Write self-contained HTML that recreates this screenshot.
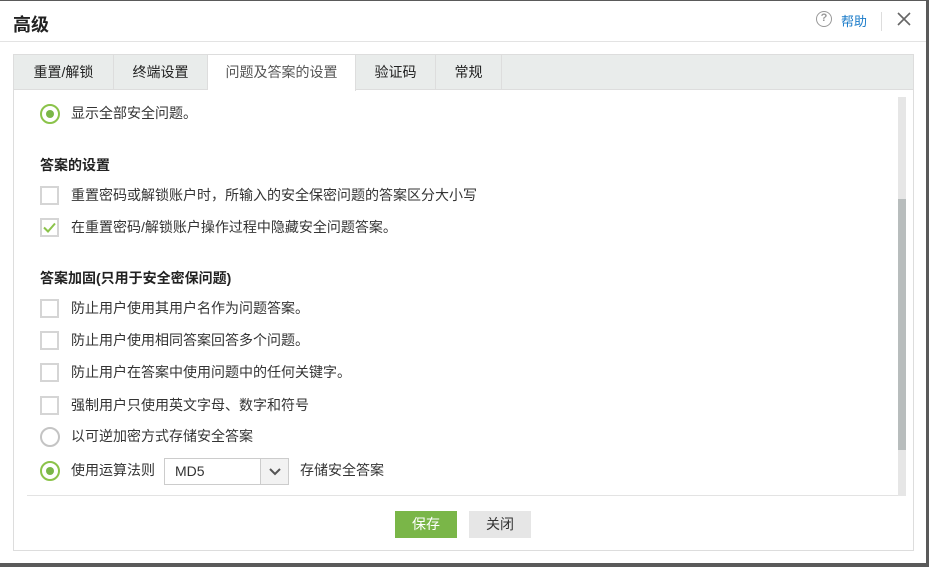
<!DOCTYPE html>
<html><head><meta charset="utf-8"><style>
*{margin:0;padding:0;box-sizing:border-box}
body{width:929px;height:567px;background:#5a5a5a;position:relative;overflow:hidden;font-family:"Liberation Sans","Noto Sans CJK SC",sans-serif;font-size:14px;color:#333}
.dlg{position:absolute;left:0;top:1px;width:926px;height:562px;background:#fff}
.title{position:absolute;left:13px;top:10px;font-size:18px;font-weight:bold;color:#222}
.hdr{position:absolute;left:0;top:40px;width:926px;height:1px;background:#e3e3e3}
.help{position:absolute;left:841px;top:10px;color:#1a7bc9;font-size:13px}
.q{position:absolute;left:816px;top:10px;width:16px;height:16px;border:1.5px solid #999;border-radius:50%;color:#999;font-size:11px;text-align:center;line-height:13px;font-weight:bold}
.sep{position:absolute;left:881px;top:11px;width:1px;height:19px;background:#ddd}
.box{position:absolute;left:13px;top:54px;width:901px;height:497px;border:1px solid #ddd}
.tabs{position:absolute;left:0;top:0;width:899px;height:35px;background:#e9eceb;border-bottom:1px solid #ddd}
.tab{position:absolute;top:0;height:35px;line-height:35px;text-align:center;border-right:1px solid #ddd;color:#222;font-size:14px}
.tab.on{background:#fff;height:36px;color:#555}
.row{position:absolute;left:40px;height:20px;line-height:20px;font-size:14px;color:#333}
.row span{position:absolute;left:31px;white-space:nowrap}
.cb{position:absolute;left:0;top:1px;width:19px;height:19px;border:2px solid #d5d5d5;background:#fff}
.rd{position:absolute;left:0;top:1px;width:20px;height:20px;border:2px solid #c4c4c4;border-radius:50%}
.rd.on{border-color:#8bc34a}
.rd.on::after{content:"";position:absolute;left:4px;top:4px;width:8px;height:8px;border-radius:50%;background:#7ab648}
.h{position:absolute;left:40px;font-weight:bold;font-size:14px;color:#222}
.sel{position:absolute;left:164px;top:458px;width:125px;height:27px;border:1px solid #ccc;background:#fff}
.sel b{position:absolute;left:10px;top:4px;font-weight:normal;font-size:14px;color:#333}
.sel i{position:absolute;right:0;top:0;width:28px;height:25px;border-left:1px solid #ccc;background:#f2f2f2}
.sbt{position:absolute;left:898px;top:97px;width:8px;height:399px;background:#e6e6e6}
.sbh{position:absolute;left:898px;top:199px;width:8px;height:251px;background:#b8bdbd}
.line{position:absolute;left:27px;top:495px;width:871px;height:1px;background:#e3e3e3}
.btn{position:absolute;top:511px;height:27px;width:62px;line-height:27px;text-align:center;font-size:14px}
</style></head><body>
<div class="dlg">
<div class="title">高级</div>
<div class="q">?</div><div class="help">帮助</div>
<div class="sep"></div>
<svg style="position:absolute;left:897px;top:11px" width="14" height="14"><path d="M1 1L13 13M13 1L1 13" stroke="#666" stroke-width="1.6"/></svg>
<div class="hdr"></div>
</div>
<div class="box">
<div class="tabs">
<div class="tab" style="left:0;width:100px">重置/解锁</div>
<div class="tab" style="left:100px;width:94px">终端设置</div>
<div class="tab on" style="left:194px;width:148px">问题及答案的设置</div>
<div class="tab" style="left:342px;width:80px">验证码</div>
<div class="tab" style="left:422px;width:66px">常规</div>
</div>
</div>
<div class="row" style="top:103px"><div class="rd on"></div><span>显示全部安全问题。</span></div>
<div class="h" style="top:155px">答案的设置</div>
<div class="row" style="top:185px"><div class="cb"></div><span>重置密码或解锁账户时，所输入的安全保密问题的答案区分大小写</span></div>
<div class="row" style="top:217px"><div class="cb"><svg width="15" height="15" style="position:absolute;left:0;top:0"><path d="M2 7.5L6 11.5L13 3.5" fill="none" stroke="#8bc34a" stroke-width="2"/></svg></div><span>在重置密码/解锁账户操作过程中隐藏安全问题答案。</span></div>
<div class="h" style="top:268px">答案加固(只用于安全密保问题)</div>
<div class="row" style="top:298px"><div class="cb"></div><span>防止用户使用其用户名作为问题答案。</span></div>
<div class="row" style="top:330px"><div class="cb"></div><span>防止用户使用相同答案回答多个问题。</span></div>
<div class="row" style="top:362px"><div class="cb"></div><span>防止用户在答案中使用问题中的任何关键字。</span></div>
<div class="row" style="top:395px"><div class="cb"></div><span>强制用户只使用英文字母、数字和符号</span></div>
<div class="row" style="top:426px"><div class="rd"></div><span>以可逆加密方式存储安全答案</span></div>
<div class="row" style="top:460px"><div class="rd on"></div><span>使用运算法则</span></div>
<div class="sel"><b>MD5</b><i><svg width="28" height="25"><path d="M9 10L14 15L19 10" fill="none" stroke="#555" stroke-width="2"/></svg></i></div>
<div class="row" style="top:460px;left:300px">存储安全答案</div>
<div class="sbt"></div><div class="sbh"></div>
<div class="line"></div>
<div class="btn" style="left:395px;background:#7ab648;color:#fff">保存</div>
<div class="btn" style="left:469px;background:#e6e6e6;color:#333">关闭</div>
</body></html>
